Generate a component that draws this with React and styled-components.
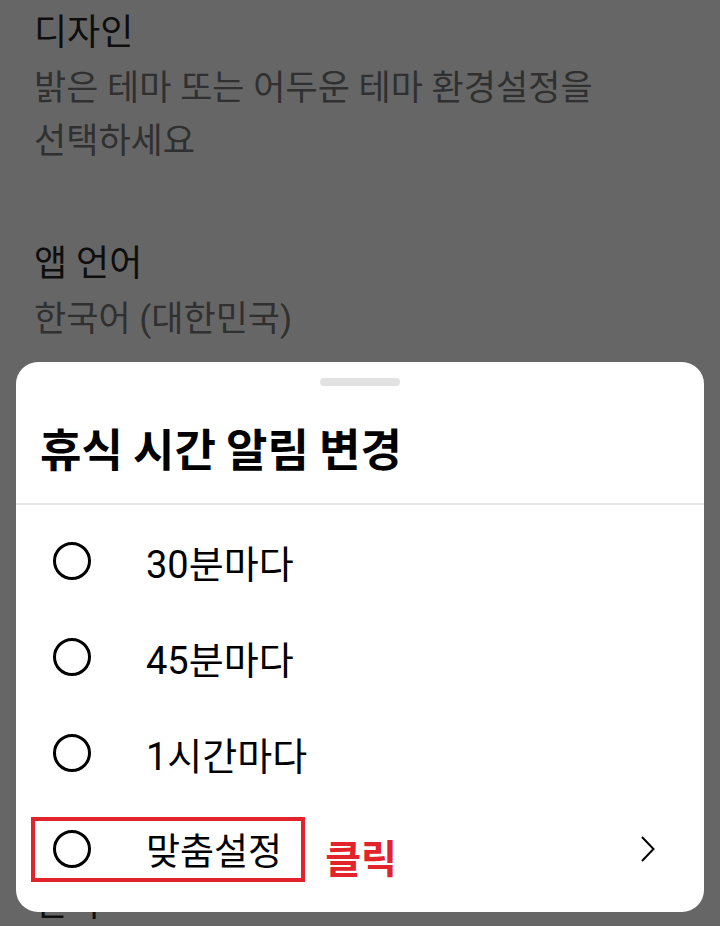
import React from "react";
import styled, { createGlobalStyle } from "styled-components";

const GlobalStyle = createGlobalStyle`
  html, body {
    margin: 0;
    padding: 0;
    background: #666666;
  }
  body {
    font-family: Roboto, "Noto Sans CJK KR", sans-serif;
    overflow: hidden;
  }
`;

const Screen = styled.div`
  position: relative;
  width: 720px;
  height: 926px;
  overflow: hidden;
  background: #666666;
`;

const SettingsList = styled.div`
  display: flex;
  flex-direction: column;
  gap: 67px;
  padding: 4px 20px 0 34px;
`;

const Setting = styled.div`
  display: flex;
  flex-direction: column;
`;

const SettingTitle = styled.div`
  font-size: 36px;
  line-height: 58px;
  color: #0e0e0e;
`;

const SettingSub = styled.div`
  font-size: 35px;
  line-height: 53px;
  color: #303030;
  white-space: nowrap;
`;

const Sheet = styled.div`
  position: absolute;
  top: 362px;
  left: 16px;
  width: 688px;
  height: 550px;
  background: #ffffff;
  border-radius: 22px;
  display: flex;
  flex-direction: column;
`;

const Handle = styled.div`
  align-self: center;
  width: 80px;
  height: 8px;
  margin-top: 16px;
  border-radius: 4px;
  background: #e2e2e2;
`;

const SheetTitle = styled.h2`
  margin: 32px 0 25px 24px;
  font-size: 45px;
  line-height: 60px;
  font-weight: 700;
  color: #000;
  font-family: "Noto Sans CJK KR", sans-serif;
`;

const Divider = styled.div`
  height: 2px;
  background: #e6e6e6;
`;

const Options = styled.div`
  display: flex;
  flex-direction: column;
  padding-top: 8px;
`;

const Row = styled.div`
  display: flex;
  align-items: center;
  height: 96px;
  padding: 0 48px 0 ${(p) => (p.$boxed ? 15 : 37)}px;
`;

const Highlight = styled.div`
  display: flex;
  align-items: center;
  height: 57px;
  padding: 0 19px 0 18px;
  border: 4px solid #e2232b;
`;

const Radio = styled.span`
  width: 38px;
  height: 38px;
  box-sizing: border-box;
  border: 3px solid #000;
  border-radius: 50%;
  flex-shrink: 0;
`;

const Label = styled.span`
  margin-left: 55px;
  font-size: ${(p) => p.$size || 38}px;
  color: #000;
  white-space: nowrap;
`;

const Note = styled.span`
  margin: 14px 0 0 20px;
  font-size: 39px;
  font-weight: 700;
  color: #e2232b;
  font-family: "Noto Sans CJK KR", sans-serif;
`;

const Chevron = styled.svg`
  margin-left: auto;
  flex-shrink: 0;
`;

// sub lines are split by hand so the list behind the sheet keeps its rhythm
const settings = [
  { title: "디자인", sub: ["밝은 테마 또는 어두운 테마 환경설정을", "선택하세요"] },
  { title: "앱 언어", sub: ["한국어 (대한민국)"] },
  { title: "알림", sub: ["휴식 시간 알림 및 기타 알림을", "관리하세요"] },
  { title: "글꼴 크기", sub: ["앱에서 사용할 글꼴 크기를", "선택하세요"] },
  { title: "번역", sub: [] },
];

const options = ["30분마다", "45분마다", "1시간마다"];

export default function App() {
  return (
    <Screen>
      <GlobalStyle />
      <SettingsList>
        {settings.map((s) => (
          <Setting key={s.title}>
            <SettingTitle>{s.title}</SettingTitle>
            {s.sub.map((line) => (
              <SettingSub key={line}>{line}</SettingSub>
            ))}
          </Setting>
        ))}
      </SettingsList>

      <Sheet>
        <Handle />
        <SheetTitle>휴식 시간 알림 변경</SheetTitle>
        <Divider />
        <Options>
          {options.map((o) => (
            <Row key={o}>
              <Radio />
              <Label>{o}</Label>
            </Row>
          ))}
          <Row $boxed>
            <Highlight>
              <Radio />
              <Label $size={37}>맞춤설정</Label>
            </Highlight>
            <Note>클릭</Note>
            <Chevron width="16" height="28" viewBox="0 0 16 28">
              <polyline
                points="2,2 13.5,14 2,26"
                fill="none"
                stroke="#000"
                strokeWidth="2"
                strokeLinejoin="miter"
              />
            </Chevron>
          </Row>
        </Options>
      </Sheet>
    </Screen>
  );
}
